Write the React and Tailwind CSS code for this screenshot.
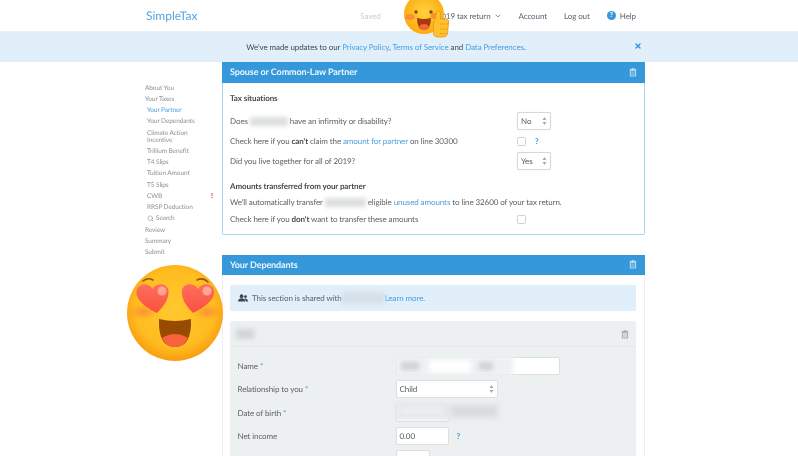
import { ChevronDown, X, Search } from 'lucide-react';

const Blur = ({ className = "" }) => (
  <span className={`inline-block align-middle blur-[2px] ${className}`} />
);

const Trash = ({ className = "" }) => (
  <svg viewBox="0 0 12 14" width="8" height="10" className={className}>
    <path d="M4 1.200h4v1.200h3v1.400H1V2.400h3z" fill="currentColor" />
    <path d="M2 4.500h8V13H2z" fill="none" stroke="currentColor" strokeWidth="1.300" />
    <path d="M4.600 6v5.500M7.400 6v5.500" stroke="currentColor" strokeWidth="1" />
  </svg>
);

const SelectArrows = () => (
  <svg viewBox="0 0 6 10" width="5" height="8" className="text-[#a5abb0]">
    <path d="M3 0l2.500 3.600h-5zM3 10L.5 6.400h5z" fill="currentColor" />
  </svg>
);

const SideItem = ({ children, active, sub, badge }) => (
  <div className={`relative text-[6.5px] leading-[7px] ${sub ? "pl-[2px]" : ""} ${active ? "text-[#4a9fe0]" : "text-[#8d9296]"}`}>
    {children}
    {badge && <span className="absolute left-[66px] top-0 text-[7px] font-bold text-[#e02020]">!</span>}
  </div>
);

const Sidebar = () => (
  <aside className="w-[77px] shrink-0 flex flex-col gap-[4.25px] pt-[22.5px]">
    <SideItem>About You</SideItem>
    <SideItem>Your Taxes</SideItem>
    <SideItem sub active>Your Partner</SideItem>
    <SideItem sub>Your Dependants</SideItem>
    <SideItem sub>Climate Action<br />Incentive</SideItem>
    <SideItem sub>Trillium Benefit</SideItem>
    <SideItem sub>T4 Slips</SideItem>
    <SideItem sub>Tuition Amount</SideItem>
    <SideItem sub>T5 Slips</SideItem>
    <SideItem sub badge>CWB</SideItem>
    <SideItem sub>RRSP Deduction</SideItem>
    <SideItem sub>
      <span className="flex items-center gap-[2px]"><Search size={7} strokeWidth={2} />Search</span>
    </SideItem>
    <SideItem>Review</SideItem>
    <SideItem>Summary</SideItem>
    <SideItem>Submit</SideItem>
  </aside>
);

const PanelHead = ({ children, className = "" }) => (
  <div className={`bg-[#3498db] flex items-center justify-between pl-[8px] pr-[8.5px] pb-[1px] text-[9px] font-bold text-[#eef6fc] ${className}`}>
    <span>{children}</span>
    <Trash className="text-[#d6eaf8]" />
  </div>
);

const Check = () => <span className="block w-[9px] h-[9px] rounded-[1.5px] border border-[#ccd1d5] bg-white" />;

const MiniSelect = ({ value }) => (
  <div className="w-[34px] h-[18px] border border-[#d4d8db] rounded-[2px] bg-white flex items-center justify-between pl-[3px] pr-[3px] text-[8px] text-[#555b60] shadow-[0_0_1px_#ddd]">
    <span>{value}</span>
    <SelectArrows />
  </div>
);

const Row = ({ children, right, h = "h-[20px]" }) => (
  <div className={`flex items-center ${h}`}>
    <div className="w-[287px] text-[8px] text-[#5d6368] whitespace-nowrap">{children}</div>
    {right}
  </div>
);

const Link = ({ children }) => <span className="text-[#4a9fe0]">{children}</span>;

const PartnerPanel = () => (
  <section className="border border-[#a9d5f5] border-t-0 rounded-b-[2px]">
    <PanelHead className="-mx-px h-[21px]">Spouse or Common-Law Partner</PanelHead>
    <div className="pl-[7px] pr-[8px] pt-[10px] h-[151px]">
      <h3 className="text-[8px] font-bold text-[#454a4e] leading-[10px] mb-[8px]">Tax situations</h3>
      <div className="flex flex-col">
        <Row right={<MiniSelect value="No" />}>Does <Blur className="w-[38px] h-[9px] bg-[#dcdee0]" /> have an infirmity or disability?</Row>
        <Row right={
          <div className="flex items-center gap-[9px]"><Check /><span className="text-[8px] font-bold text-[#3498db]">?</span></div>
        }>Check here if you <b className="text-[#454a4e]">can't</b> claim the <Link>amount for partner</Link> on line 30300</Row>
        <Row right={<MiniSelect value="Yes" />}>Did you live together for all of 2019?</Row>
      </div>
      <h3 className="text-[8px] font-bold text-[#454a4e] leading-[10px] mt-[10px] mb-[6px]">Amounts transferred from your partner</h3>
      <div className="text-[8px] text-[#5d6368] leading-[10px] whitespace-nowrap mb-[7px]">
        We'll automatically transfer <Blur className="w-[41px] h-[9px] bg-[#dcdee0]" /> eligible <Link>unused amounts</Link> to line 32600 of your tax return.
      </div>
      <Row h="h-[10px]" right={<Check />}>Check here if you <b className="text-[#454a4e]">don't</b> want to transfer these amounts</Row>
    </div>
  </section>
);

const FormRow = ({ label, required, children }) => (
  <div className="flex items-center h-[23.5px]">
    <div className="w-[158px] text-[8px] text-[#5d6368]">
      {label}{required && <span className="text-[#4a9fe0]"> *</span>}
    </div>
    {children}
  </div>
);

const Input = ({ className = "", children }) => (
  <div className={`h-[18px] bg-white border border-[#dcdfe1] rounded-[2px] flex items-center px-[3px] text-[8px] text-[#555b60] ${className}`}>{children}</div>
);

const UsersIcon = () => (
  <svg viewBox="0 0 14 11" width="10" height="8" className="mr-[4px] text-[#3f4448]">
    <circle cx="5" cy="3" r="2.600" fill="currentColor" />
    <circle cx="10.500" cy="3.500" r="2" fill="currentColor" />
    <path d="M0 10.500c0-6 10-6 10 0z" fill="currentColor" />
    <path d="M10.800 10.500H14c0-3.800-3.500-4.800-5.500-4 1.300.9 2.200 2.200 2.300 4z" fill="currentColor" />
  </svg>
);

const DependantsPanel = () => (
  <section className="border-x border-[#eceef0]">
    <PanelHead className="-mx-px h-[20.5px]">Your Dependants</PanelHead>
    <div className="pl-[7px] pr-[8px] pt-[10px]">
      <div className="h-[26px] rounded-[2px] bg-[#e1effa] flex items-center pl-[8px] text-[8px] text-[#5d6368]">
        <UsersIcon />
        This section is shared with<Blur className="w-[43px] h-[12px] bg-[#d6e0e8]" /><Link>Learn more.</Link>
      </div>
      <div className="mt-[10px] bg-[#ecf0f1] rounded-[2px] h-[200px]">
        <div className="h-[26px] flex items-center justify-between pl-[6px] pr-[7px] border-b border-[#e4e8e9]">
          <Blur className="w-[18px] h-[10px] bg-[#d2d6d8]" />
          <Trash className="text-[#99a0a4]" />
        </div>
        <div className="pl-[7.5px] pt-[7px]">
          <FormRow label="Name" required>
            <div className="relative">
              <Input className="w-[164px]" />
              <div className="absolute left-0 top-[-1px] w-[117px] h-[20px] flex items-center bg-[#eef0f1] blur-[2px]">
                <span className="ml-[5px] w-[18px] h-[8px] bg-[#cfd3d5]" />
                <span className="ml-[10px] w-[42px] h-[12px] bg-white" />
                <span className="ml-[8px] w-[14px] h-[8px] bg-[#cfd3d5]" />
              </div>
            </div>
          </FormRow>
          <FormRow label="Relationship to you" required>
            <Input className="w-[102px] justify-between">Child<SelectArrows /></Input>
          </FormRow>
          <FormRow label="Date of birth" required>
            <div className="relative">
              <Input className="w-[53px]" />
              <div className="absolute left-0 top-[-1px] w-[104px] h-[17px] flex items-center bg-[#e4e7e8] blur-[2px]">
                <span className="ml-[4px] w-[44px] h-[8px] bg-[#eceef0]" />
                <span className="ml-[8px] w-[44px] h-[10px] bg-[#d8dcde]" />
              </div>
            </div>
          </FormRow>
          <FormRow label="Net income">
            <Input className="w-[53px]">0.00</Input>
            <span className="ml-[8px] text-[8px] font-bold text-[#3498db]">?</span>
          </FormRow>
          <div className="pl-[158px] pt-[2px]">
            <Input className="w-[34px]" />
          </div>
        </div>
      </div>
    </div>
  </section>
);

const HeartEyes = () => (
  <svg viewBox="0 0 96 96" width="96" height="96" className="absolute left-[127px] top-[265px]">
    <defs>
      <radialGradient id="faceA" cx="50%" cy="45%" r="55%">
        <stop offset="0%" stopColor="#ffc930" />
        <stop offset="75%" stopColor="#ffbc20" />
        <stop offset="100%" stopColor="#f99c10" />
      </radialGradient>
      <radialGradient id="blush">
        <stop offset="0%" stopColor="#fb7d3c" stopOpacity=".65" />
        <stop offset="100%" stopColor="#fb7d3c" stopOpacity="0" />
      </radialGradient>
      <linearGradient id="heart" x1="0" y1="0" x2="0" y2="1">
        <stop offset="0%" stopColor="#ff6f5c" />
        <stop offset="100%" stopColor="#f9503f" />
      </linearGradient>
    </defs>
    <circle cx="48" cy="48" r="48" fill="url(#faceA)" />
    <ellipse cx="16" cy="47" rx="15" ry="8" fill="url(#blush)" />
    <ellipse cx="80" cy="47" rx="15" ry="8" fill="url(#blush)" />
    <path d="M16 16q5-4 10-1M70 15q6-3 11 2" fill="none" stroke="#8c5a14" strokeWidth="1.600" strokeLinecap="round" />
    <path d="M30 48C20 43 8 35 9.500 26c1.500-8 12-9 16-2 4-7 15.500-6 16 2 .5 8-4.500 15-11.500 22z" fill="url(#heart)" />
    <path d="M66 48c-7-7-11.500-14-11-22 .5-8 12-9 16-2 4-7 15-6 16 2 1.500 9-11 17-21 22z" fill="url(#heart)" />
    <circle cx="35" cy="26" r="4.500" fill="#ffb0a0" opacity=".85" />
    <circle cx="80" cy="26" r="4.500" fill="#ffb0a0" opacity=".85" />
    <path d="M32 54q16 4 32 0q1 28-16 28T32 54z" fill="#964b00" />
    <path d="M35 73q13-8 26 0q-4 9-13 9t-13-9z" fill="#f9623e" />
  </svg>
);

const ThumbsUp = () => (
  <svg viewBox="0 0 46 46" width="46" height="46" className="absolute left-[404px] top-[-6px]">
    <defs>
      <radialGradient id="faceB" cx="50%" cy="45%" r="58%">
        <stop offset="0%" stopColor="#ffd23c" />
        <stop offset="100%" stopColor="#fba90e" />
      </radialGradient>
    </defs>
    <circle cx="20" cy="20" r="20" fill="url(#faceB)" />
    <ellipse cx="6" cy="23" rx="5" ry="3" fill="#fb7a3c" opacity=".7" />
    <ellipse cx="31" cy="22" rx="4.500" ry="3" fill="#fb7a3c" opacity=".7" />
    <circle cx="12" cy="18" r="1.700" fill="#7a4a10" />
    <circle cx="27" cy="18" r="1.700" fill="#7a4a10" />
    <path d="M13 24q7 2 14 0q0 12-7 12T13 24z" fill="#a63a10" />
    <path d="M15 32q5-4 10 0q-2 4-5 4t-5-4z" fill="#f9623e" />
    <path d="M31 26l2-9q3-1 3.500 2.500V25h6q3 1 2 4l-1 11q-1 3-4 3h-7q-3-1-3-3V29z" fill="#ffc02e" stroke="#e89a16" strokeWidth=".8" />
    <path d="M36 30h8.500M36 35h8M36 39.500h7" stroke="#e89a16" strokeWidth=".8" />
  </svg>
);

const HelpIcon = () => (
  <span className="w-[9px] h-[9px] rounded-full bg-[#3498db] flex items-center justify-center text-[7px] font-bold leading-none text-white">?</span>
);

const App = () => {
  return (
    <div className="relative w-[798px] h-[456px] overflow-hidden bg-white font-['Lato','Liberation_Sans',sans-serif] tracking-[-0.09px] [text-rendering:geometricPrecision] blur-[0.3px]">
      <header className="h-[31px] bg-white flex items-center pl-[145px] pr-[162px] text-[8px] text-[#5d6368]">
        <span className="text-[12px] text-[#5aa6e2] ml-[1px] tracking-normal">SimpleTax</span>
        <span className="ml-auto text-[#c9cdd0]">Saved</span>
        <span className="ml-[56px] flex items-center gap-[3px]">2019 tax return <ChevronDown size={8} /></span>
        <span className="ml-[17px]">Account</span>
        <span className="ml-[17px]">Log out</span>
        <span className="ml-[17px] flex items-center gap-[4px]">
          <HelpIcon />Help
        </span>
      </header>
      <div className="relative h-[31px] bg-[#e1effa] flex items-center justify-center pr-[26px] text-[8px] text-[#454a4e]">
        <span>We've made updates to our <Link>Privacy Policy</Link>, <Link>Terms of Service</Link> and <Link>Data Preferences</Link>.</span>
        <X size={8} strokeWidth={4} className="absolute left-[634px] top-[11px] text-[#3498db]" />
      </div>
      <main className="flex pl-[145px]">
        <Sidebar />
        <div className="w-[423px] flex flex-col gap-[19.5px]">
          <PartnerPanel />
          <DependantsPanel />
        </div>
      </main>
      <ThumbsUp />
      <HeartEyes />
    </div>
  );
};

export default App;
